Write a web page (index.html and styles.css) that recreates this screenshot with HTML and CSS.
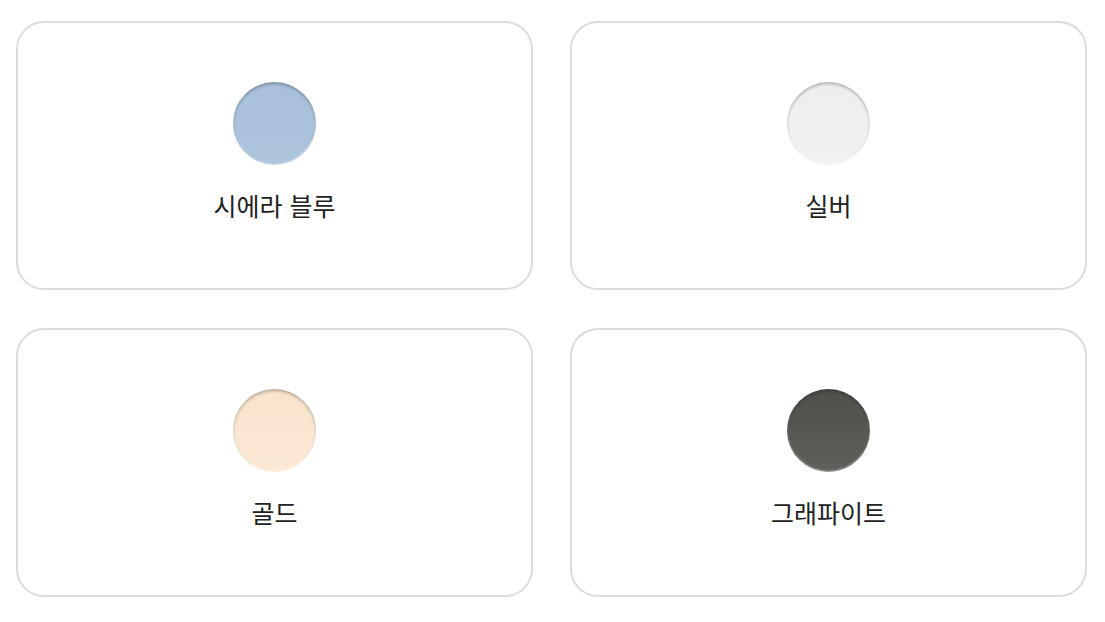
FILE: index.html
```html
<!DOCTYPE html>
<html lang="ko">
<head>
  <meta charset="UTF-8">
  <meta name="viewport" content="width=device-width, initial-scale=1.0">
  <title>색상</title>
  <link rel="stylesheet" href="styles.css">
</head>
<body>
  <main class="colors">
    <div class="card">
      <span class="swatch blue"></span>
      <span class="name">시에라 블루</span>
    </div>
    <div class="card">
      <span class="swatch silver"></span>
      <span class="name">실버</span>
    </div>
    <div class="card">
      <span class="swatch gold"></span>
      <span class="name">골드</span>
    </div>
    <div class="card">
      <span class="swatch graphite"></span>
      <span class="name">그래파이트</span>
    </div>
  </main>
</body>
</html>
```

FILE: styles.css
```css
* {
  margin: 0px;
  padding: 0px;
  box-sizing: border-box;
}
body {
  background-color: white;
  font-family: "Noto Sans CJK KR", "Noto Sans", sans-serif;
  color: #222;
}
.colors {
  display: grid;
  grid-template-columns: 517px 517px;
  column-gap: 37px;
  row-gap: 38px;
  padding: 21px 0px 0px 16px;
}
.card {
  height: 269px;
  border: 2px solid #dcdcdc;
  border-radius: 28px;
  display: flex;
  flex-direction: column;
  align-items: center;
  padding-top: 59px;
}
.swatch {
  width: 83px;
  height: 83px;
  border-radius: 50%;
  box-shadow: inset 0px 2px 3px rgba(0, 0, 0, 0.25), inset 0px -1px 2px rgba(255, 255, 255, 0.5);
}
.blue {background: linear-gradient(#a8c0da, #adc4dd);}
.silver {background: linear-gradient(#eeefec, #f1f2ef);}
.gold {background: linear-gradient(#f9e4cd, #fbe8d4);}
.graphite {background: linear-gradient(#4f4e4b, #615f5b);}
.name {
  margin-top: 24px;
  font-size: 25px;
  line-height: 32px;
  font-weight: 400;
}
```
